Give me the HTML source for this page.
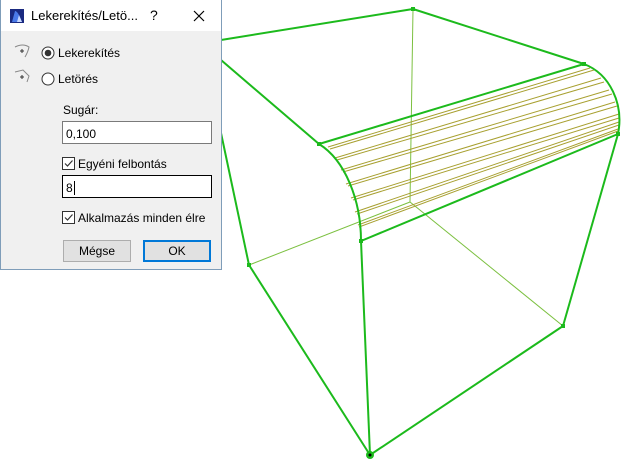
<!DOCTYPE html>
<html><head><style>
body{margin:0;width:625px;height:462px;background:#fff;position:relative;overflow:hidden;font-family:"Liberation Sans",sans-serif;font-size:12px;color:#000}
.dlg{position:absolute;left:0;top:0;width:220px;height:269px;border:1px solid #7f9db9;border-top:none;background:#f0f0f0}
.tb{position:absolute;left:0;top:0;width:220px;height:31px;background:#fff}
.ab{position:absolute}
.inp{position:absolute;left:61px;width:150px;height:23px;border:1px solid #7a7a7a;background:#fff;box-sizing:border-box;padding:5px 3px;font-size:12px}
.cb{position:absolute;left:61px;width:13px;height:13px;border:1px solid #333;background:#fff;box-sizing:border-box}
.btn{position:absolute;top:240px;width:68px;height:22px;box-sizing:border-box;text-align:center;line-height:20px;font-size:12px}
</style></head><body>
<svg width="625" height="462" style="position:absolute;left:0;top:0">
<g stroke="#7cc040" stroke-width="1" fill="none">
<line x1="413" y1="9" x2="410" y2="202"/><line x1="249" y1="265" x2="410" y2="202"/><line x1="410" y1="202" x2="563" y2="326"/>
</g>
<g stroke="#a8a030" stroke-width="1" fill="none">
<line x1="328" y1="147" x2="590" y2="68"/><line x1="330" y1="149" x2="594" y2="70"/>
<line x1="335" y1="158" x2="601" y2="78"/><line x1="337" y1="160" x2="604" y2="82"/>
<line x1="341" y1="170" x2="609" y2="90"/><line x1="343" y1="172" x2="612" y2="94"/>
<line x1="346" y1="184" x2="615" y2="102"/><line x1="348" y1="186" x2="617" y2="106"/>
<line x1="351" y1="198" x2="619" y2="114"/><line x1="353" y1="200" x2="619" y2="118"/>
<line x1="355" y1="212" x2="619" y2="122"/><line x1="357" y1="214" x2="619" y2="125"/>
<line x1="358" y1="225" x2="618" y2="129"/><line x1="359" y1="227" x2="618" y2="131"/>
</g>
<g stroke="#1cba1c" stroke-width="2" fill="none">
<line x1="221" y1="40" x2="413" y2="9"/><line x1="413" y1="9" x2="584" y2="64"/>
<line x1="221" y1="60" x2="319" y2="144"/><line x1="319" y1="144" x2="584" y2="64"/>
<path d="M319 144 C345 160 361 200 361 241"/>
<path d="M584 64 C610 74 624 104 618 134"/>
<line x1="361" y1="241" x2="618" y2="134"/>
<line x1="618" y1="134" x2="563" y2="326"/>
<line x1="221" y1="133" x2="249" y2="265"/>
<line x1="249" y1="265" x2="370" y2="455"/><line x1="361" y1="241" x2="370" y2="455"/>
<line x1="370" y1="455" x2="563" y2="326"/>
</g>
<g fill="#1cba1c"><rect x="411" y="7" width="4" height="4"/><rect x="582" y="62" width="4" height="4"/><rect x="317" y="142" width="4" height="4"/><rect x="359" y="239" width="4" height="4"/><rect x="616" y="132" width="4" height="4"/><rect x="247" y="263" width="4" height="4"/><rect x="561" y="324" width="4" height="4"/><circle cx="370" cy="455" r="4"/></g>
<circle cx="370" cy="455" r="1.5" fill="#000"/>
</svg>
<div class="dlg">
<div class="tb">
<svg class="ab" style="left:9px;top:9px" width="14" height="14"><rect width="14" height="14" fill="#1a2a80"/><path d="M2 13 L5 2 Q8 2 12 13 Z" fill="#4a7ae8"/><path d="M7 13 L9 6 L12 13Z" fill="#c8d8ff"/></svg>
<div class="ab" style="left:30px;top:8px;font-size:13px">Lekerekítés/Letö...</div>
<div class="ab" style="left:149px;top:7px;font-size:14px">?</div>
<svg class="ab" style="left:192px;top:10px" width="12" height="12"><path d="M1 1L11 11M11 1L1 11" stroke="#000" stroke-width="1.2"/></svg>
</div>
<svg class="ab" style="left:12px;top:42px" width="20" height="20"><path d="M2 5 Q10 1 16 5 Q15 10 12 15" stroke="#888" fill="none"/><path d="M7 9h4M9 7v4" stroke="#333"/></svg>
<svg class="ab" style="left:12px;top:67px" width="20" height="20"><path d="M2 5 L10 3 L16 9 L14 15" stroke="#888" fill="none"/><path d="M7 10h4M9 8v4" stroke="#333"/></svg>
<svg class="ab" style="left:40px;top:46px" width="14" height="14"><circle cx="7" cy="7" r="6" fill="#fff" stroke="#333"/><circle cx="7" cy="7" r="3.3" fill="#333"/></svg>
<div class="ab" style="left:57px;top:46px">Lekerekítés</div>
<svg class="ab" style="left:40px;top:72px" width="14" height="14"><circle cx="7" cy="7" r="6" fill="#fff" stroke="#333"/></svg>
<div class="ab" style="left:57px;top:72px">Letörés</div>
<div class="ab" style="left:62px;top:103px">Sugár:</div>
<div class="inp" style="top:121px">0,100</div>
<div class="cb" style="top:157px"></div><svg class="ab" style="left:62px;top:158px" width="11" height="11"><path d="M2 5.5L4.5 8L9.5 2.5" stroke="#333" fill="none" stroke-width="1.2"/></svg>
<div class="ab" style="left:77px;top:157px">Egyéni felbontás</div>
<div class="inp" style="top:175px;border-color:#000">8<span style="border-left:1px solid #000;margin-left:1px"></span></div>
<div class="cb" style="top:211px"></div><svg class="ab" style="left:62px;top:212px" width="11" height="11"><path d="M2 5.5L4.5 8L9.5 2.5" stroke="#333" fill="none" stroke-width="1.2"/></svg>
<div class="ab" style="left:77px;top:211px">Alkalmazás minden élre</div>
<div class="btn" style="left:62px;background:#e1e1e1;border:1px solid #adadad">Mégse</div>
<div class="btn" style="left:142px;background:#e1e1e1;border:2px solid #0078d7;line-height:18px">OK</div>
</div>
</body></html>
